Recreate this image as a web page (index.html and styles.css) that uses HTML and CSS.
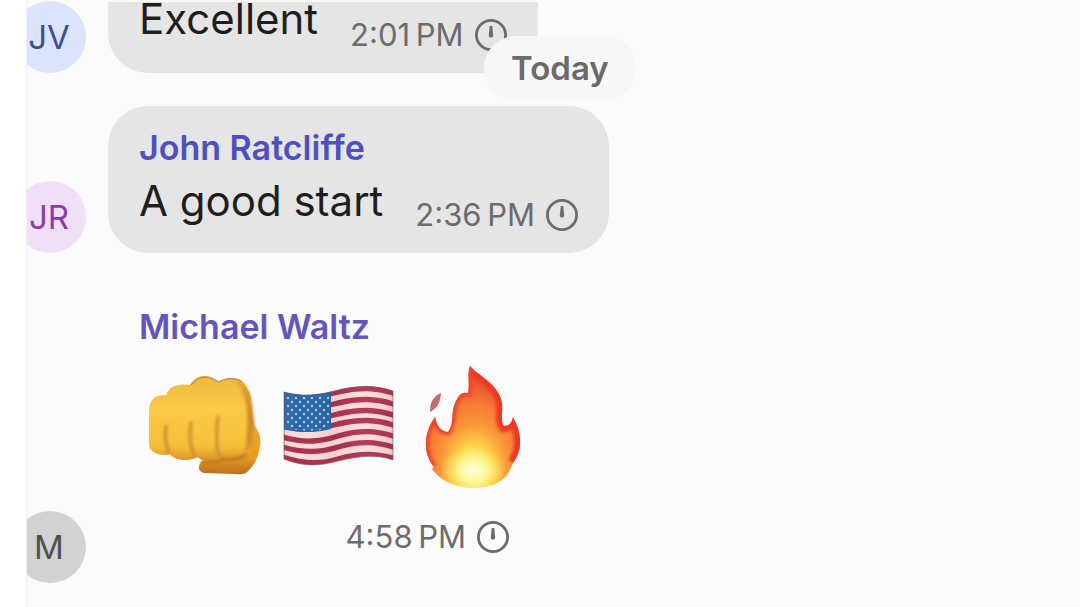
FILE: index.html
```html
<!DOCTYPE html>
<html lang="en">
<head>
<meta charset="utf-8">
<title>Group chat</title>
<link rel="stylesheet" href="styles.css">
</head>
<body>
<svg class="defs" aria-hidden="true">
  <symbol id="timer" viewBox="0 0 34 34">
    <circle cx="17" cy="17" r="14.6" fill="none" stroke="currentColor" stroke-width="2.8"/>
    <path d="M15.7 8h2.6l.9 9.4a2.2 2.2 0 0 1-4.4 0z" fill="currentColor"/>
  </symbol>
</svg>
<main class="chat">
  <article class="message message-first">
    <div class="avatar avatar-blue">JV</div>
    <div class="bubble bubble-cut">
      <div class="line">
        <p class="text">Excellent</p>
        <div class="meta"><time>2:01&#8201;PM</time><svg class="timer"><use href="#timer"/></svg></div>
      </div>
      <div class="day">Today</div>
    </div>
  </article>
  <article class="message message-second">
    <div class="avatar avatar-pink">JR</div>
    <div class="bubble">
      <h2 class="name">John Ratcliffe</h2>
      <div class="line">
        <p class="text">A good start</p>
        <div class="meta"><time>2:36&#8201;PM</time><svg class="timer"><use href="#timer"/></svg></div>
      </div>
    </div>
  </article>
  <article class="message">
    <div class="avatar avatar-gray">M</div>
    <div class="bubble bubble-clear">
      <h2 class="name name-violet">Michael Waltz</h2>
      <div class="emojis">
        <svg class="emoji" viewBox="0 -1 114 124" role="img" aria-label="Oncoming fist">
          <defs>
            <linearGradient id="skin" x1="0" y1="0" x2="0" y2="1"><stop offset="0" stop-color="#efb93b"/><stop offset=".4" stop-color="#fbca47"/><stop offset=".82" stop-color="#f7bf38"/><stop offset="1" stop-color="#d9902a"/></linearGradient>
            <linearGradient id="side" x1="0" y1="0" x2="1" y2="0"><stop offset="0" stop-color="#d98a26" stop-opacity="0"/><stop offset="1" stop-color="#c57d22"/></linearGradient>
            <linearGradient id="thumb" x1="0" y1="0" x2="0" y2="1"><stop offset="0" stop-color="#f0ac31"/><stop offset=".7" stop-color="#e79a25"/><stop offset="1" stop-color="#b87021"/></linearGradient>
            <filter id="soft" x="-30%" y="-30%" width="160%" height="160%"><feGaussianBlur stdDeviation="1.6"/></filter>
          </defs>
          <path d="M100 52C110 62 114 70 112 80C110 94 105 101 98 107Q94 109 86 108L56 107Q50 106 51 100Q52 94 60 94L92 84Z" fill="url(#thumb)"/>
          <path d="M1 44C2 32 8 29 18 29C21 20 31 17 42 19C47 10 56 8 64 12L71 16C80 10 94 11 99 22C104 29 104 42 106 57L103 83C101 91 95 94 87 91L73 92C68 97 55 96 49 91C44 95 27 96 22 88C14 91 2 87 1 79Z" fill="url(#skin)"/>
          <path d="M90 21C98 28 99 44 99 59L97 86Q103 84 104 76L106 57C104 42 104 29 99 22C96 16 90 13 84 13Z" fill="url(#side)" filter="url(#soft)"/>
          <g fill="none" stroke="#d09230" stroke-width="3.4" stroke-linecap="round" filter="url(#soft)"><path d="M18 60Q16 76 21 87M43 57Q40 79 47 90M70 51Q67 79 71 90"/></g>
          <path d="M53 96Q67 98 75 93Q91 95 99 88" fill="none" stroke="#bc7725" stroke-width="3" filter="url(#soft)"/>
          <path d="M43 19Q53 7 65 13L71 16Q84 9 94 16" fill="none" stroke="#bd9654" stroke-width="1.5"/>
        </svg>
        <svg class="emoji" viewBox="0 -3 114 124" role="img" aria-label="Flag of the United States">
          <defs>
            <clipPath id="flag"><path d="M2 24C24 30 41 26 56 22C77 17 94 17 111 23V92C94 86 77 88 56 93C38 98 21 99 2 91Z"/></clipPath>
            <pattern id="stars" width="8" height="8" patternUnits="userSpaceOnUse"><circle cx="2" cy="2" r="1.25" fill="#a9cbe6"/><circle cx="6" cy="6" r="1.25" fill="#a9cbe6"/></pattern>
            <linearGradient id="shade"><stop offset="0" stop-color="#54303a" stop-opacity=".16"/><stop offset=".12" stop-color="#fff" stop-opacity="0"/><stop offset=".44" stop-color="#54303a" stop-opacity=".08"/><stop offset=".72" stop-color="#fff" stop-opacity=".06"/><stop offset="1" stop-color="#54303a" stop-opacity=".14"/></linearGradient>
          </defs>
          <g clip-path="url(#flag)">
            <path d="M0 0H114V124H0Z" fill="#ffdcdc"/>
            <g fill="none" stroke="#ae2f49" stroke-width="5.4">
              <path d="M0 26C24 32 41 28 56 24C77 19 94 19 114 26"/>
              <path d="M0 37C24 43 41 39 56 35C77 30 94 30 114 37"/>
              <path d="M0 48C24 54 41 50 56 46C77 41 94 41 114 48"/>
              <path d="M0 58C24 64 41 60 56 56C77 51 94 51 114 58"/>
              <path d="M0 69C24 76 41 73 56 68C77 62 94 62 114 69"/>
              <path d="M0 79C24 86 41 84 56 79C77 73 94 73 114 80"/>
              <path d="M0 89C24 97 41 96 56 91C77 85 94 85 114 91"/>
            </g>
            <path d="M0 20H49V61C34 65 18 65 0 61Z" fill="#2867a6"/>
            <path d="M4 29H48V60C34 64 18 63 4 60Z" fill="url(#stars)"/>
            <path d="M0 0H114V124H0Z" fill="url(#shade)"/>
          </g>
          <path d="M2 24C24 30 41 26 56 22C77 17 94 17 111 23V92C94 86 77 88 56 93C38 98 21 99 2 91Z" fill="none" stroke="#705660" stroke-opacity=".6"/>
        </svg>
        <svg class="emoji" viewBox="6 0 114 124" role="img" aria-label="Fire">
          <defs>
            <radialGradient id="flame" gradientUnits="userSpaceOnUse" cx="64" cy="106" r="94" gradientTransform="translate(64 106) scale(.72 1) translate(-64 -106)"><stop offset="0" stop-color="#fffbd0"/><stop offset=".13" stop-color="#fff48b"/><stop offset=".29" stop-color="#ffcf45"/><stop offset=".5" stop-color="#fb9738"/><stop offset=".72" stop-color="#f57a35"/><stop offset="1" stop-color="#e84b2b"/></radialGradient>
            <radialGradient id="glow"><stop offset="0" stop-color="#fffce0"/><stop offset=".45" stop-color="#fff798" stop-opacity=".85"/><stop offset="1" stop-color="#ffe35b" stop-opacity="0"/></radialGradient>
            <clipPath id="fireclip"><path id="fireshape" d="M60 1C67 10 89 19 92 38C93 48 90 56 94 61C100 61 102 57 103 52C112 68 113 85 103 98L99 107C92 119 78 123 63 123C44 122 31 116 22 104L24 102C12 88 14 67 25 52C27 61 30 66 38 67C45 58 40 47 46 36Q50 26 58 28C60 19 57 9 60 1Z"/></clipPath>
          </defs>
          <use href="#fireshape" fill="url(#flame)"/>
          <g clip-path="url(#fireclip)">
            <path d="M60 1C67 10 89 19 92 38C93 48 90 56 94 61C100 61 102 57 103 52C112 68 113 85 103 98" fill="none" stroke="#ee3928" stroke-width="12" filter="url(#soft)"/>
            <path d="M24 102C12 88 14 67 25 52C27 61 30 66 38 67C45 58 40 47 46 36Q50 26 58 28L60 1" fill="none" stroke="#ed4a2e" stroke-width="7" filter="url(#soft)"/>
            <ellipse cx="63" cy="105" rx="33" ry="24" fill="url(#glow)"/>
          </g>
          <path d="M20 47C20 38 22 32 31 28C30 39 27 43 20 47Z" fill="#c96a6c"/>
        </svg>
      </div>
      <div class="meta meta-below"><time>4:58&#8201;PM</time><svg class="timer"><use href="#timer"/></svg></div>
    </div>
  </article>
</main>
</body>
</html>
```
FILE: styles.css
```css
* {
  box-sizing: border-box;
}

body {
  margin: 0;
  background: #fff;
  color: #1e1e1e;
  font-family: Inter, "Liberation Sans", sans-serif;
}

.defs {
  position: absolute;
  width: 0;
  height: 0;
}

.chat {
  display: flex;
  flex-direction: column;
  min-height: 100vh;
  margin-left: 26px;
  padding-top: 1px;
  border-left: 1px solid #f0f0f0;
  background: #fbfbfb;
  overflow: hidden;
}

.message {
  display: flex;
  align-items: flex-end;
  gap: 22px;
  margin-left: -13px;
}

.message-first {
  margin-bottom: 33px;
}

.message-second {
  margin-bottom: 40px;
}

.avatar {
  display: flex;
  flex: none;
  align-items: center;
  justify-content: center;
  width: 72px;
  height: 72px;
  border-radius: 50%;
  font-size: 33px;
  padding-right: 2px;
}

.avatar-blue {
  background: #dbe4fc;
  color: #3e4f96;
}

.avatar-pink {
  background: #f0dff7;
  color: #8c3ca8;
}

.avatar-gray {
  background: #d2d2d2;
  color: #505050;
}

.bubble {
  position: relative;
  padding: 22px 30px 20px 31px;
  border-radius: 40px;
  background: #e5e5e5;
}

.bubble-cut {
  padding-top: 0;
  border-radius: 0 0 40px 40px;
}

.bubble-cut .text {
  line-height: 34px;
  padding-bottom: 17px;
}

.bubble-clear {
  padding-top: 14px;
  padding-bottom: 28px;
  background: none;
}

.name {
  margin: 0 0 7px;
  color: #4c50c0;
  font-size: 34px;
  font-weight: 600;
  line-height: 40px;
  font-variant-ligatures: none;
}

.name-violet {
  color: #6554bd;
}

.line {
  display: flex;
  align-items: flex-end;
  gap: 32px;
}

.text {
  margin: 0;
  font-size: 42px;
  line-height: 52px;
  padding-bottom: 6px;
  white-space: nowrap;
}

.meta {
  display: flex;
  align-items: center;
  gap: 10px;
  color: #6c6c6c;
  font-size: 31px;
  line-height: 36px;
  white-space: nowrap;
}

.meta-below {
  justify-content: flex-end;
  padding-right: 20px;
}

.timer {
  width: 34px;
  height: 34px;
}

.day {
  position: absolute;
  top: 34px;
  left: 376px;
  padding: 12px 27px;
  border-radius: 32px;
  background: #f7f7f7;
  color: #6a6a6a;
  font-size: 33px;
  font-weight: 600;
  line-height: 40px;
}

.emojis {
  display: flex;
  gap: 20px;
  padding: 11px 0 30px 9px;
}

.emoji {
  width: 114px;
  height: 124px;
}
```
